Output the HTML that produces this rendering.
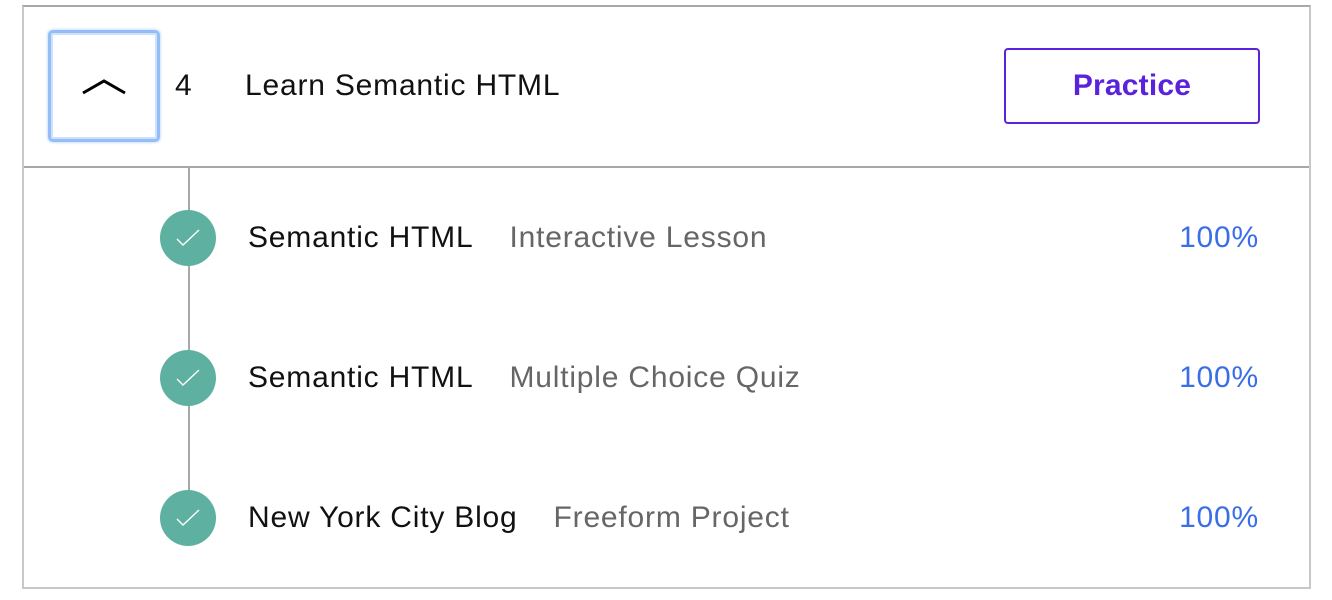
<!DOCTYPE html>
<html><head><style>
body{margin:0;width:1332px;height:600px;background:#fff;font-family:"Liberation Sans",sans-serif;position:relative;overflow:hidden}
.a{position:absolute}
.t{font-size:30px;letter-spacing:0.8px;color:#111;white-space:nowrap}
.g{color:#666}
.p{color:#3a6ee8;right:73px;text-align:right}
.c{width:56px;height:56px;border-radius:50%;background:#5eb1a0;left:160px}
</style></head><body>
<div class="a" style="left:22px;top:5px;width:1285px;height:580px;border:2px solid #c8c8c8;border-top:2px solid #a8a8a8"></div>
<div class="a" style="left:24px;top:166px;width:1285px;height:2px;background:#a8a8a8"></div>
<div class="a" style="left:188px;top:168px;width:2px;height:350px;background:#a8a8a8"></div>
<div class="a" style="left:48px;top:30px;width:106px;height:106px;border:3px solid #93bdf7;border-radius:5px;box-shadow:0 0 0 2px #cfe0fb inset, 0 0 2px 1px #cfe0fb"></div>
<svg class="a" style="left:80px;top:74px" width="48" height="24"><path d="M3 19 L24 7 L45 19" fill="none" stroke="#000" stroke-width="3"/></svg>
<div class="a t" style="left:175px;top:69px">4</div>
<div class="a t" style="left:245px;top:69px">Learn Semantic HTML</div>
<div class="a" style="left:1004px;top:48px;width:252px;height:72px;border:2px solid #5b22dd;border-radius:4px;color:#5b22dd;font-weight:bold;font-size:30px;letter-spacing:0.2px;text-align:center;line-height:72px">Practice</div>

<div class="a c" style="top:210px"></div>
<div class="a c" style="top:350px"></div>
<div class="a c" style="top:490px"></div>
<svg class="a" style="left:160px;top:210px" width="56" height="336"><g fill="none" stroke="#fff" stroke-width="1.4"><path d="M17 29 L23 35 L39 20"/><path d="M17 169 L23 175 L39 160"/><path d="M17 309 L23 315 L39 300"/></g></svg>

<div class="a t" style="left:248px;top:221px">Semantic HTML<span class="g" style="margin-left:36px">Interactive Lesson</span></div>
<div class="a t p" style="top:221px">100%</div>
<div class="a t" style="left:248px;top:361px">Semantic HTML<span class="g" style="margin-left:36px">Multiple Choice Quiz</span></div>
<div class="a t p" style="top:361px">100%</div>
<div class="a t" style="left:248px;top:501px">New York City Blog<span class="g" style="margin-left:36px">Freeform Project</span></div>
<div class="a t p" style="top:501px">100%</div>
</body></html>
